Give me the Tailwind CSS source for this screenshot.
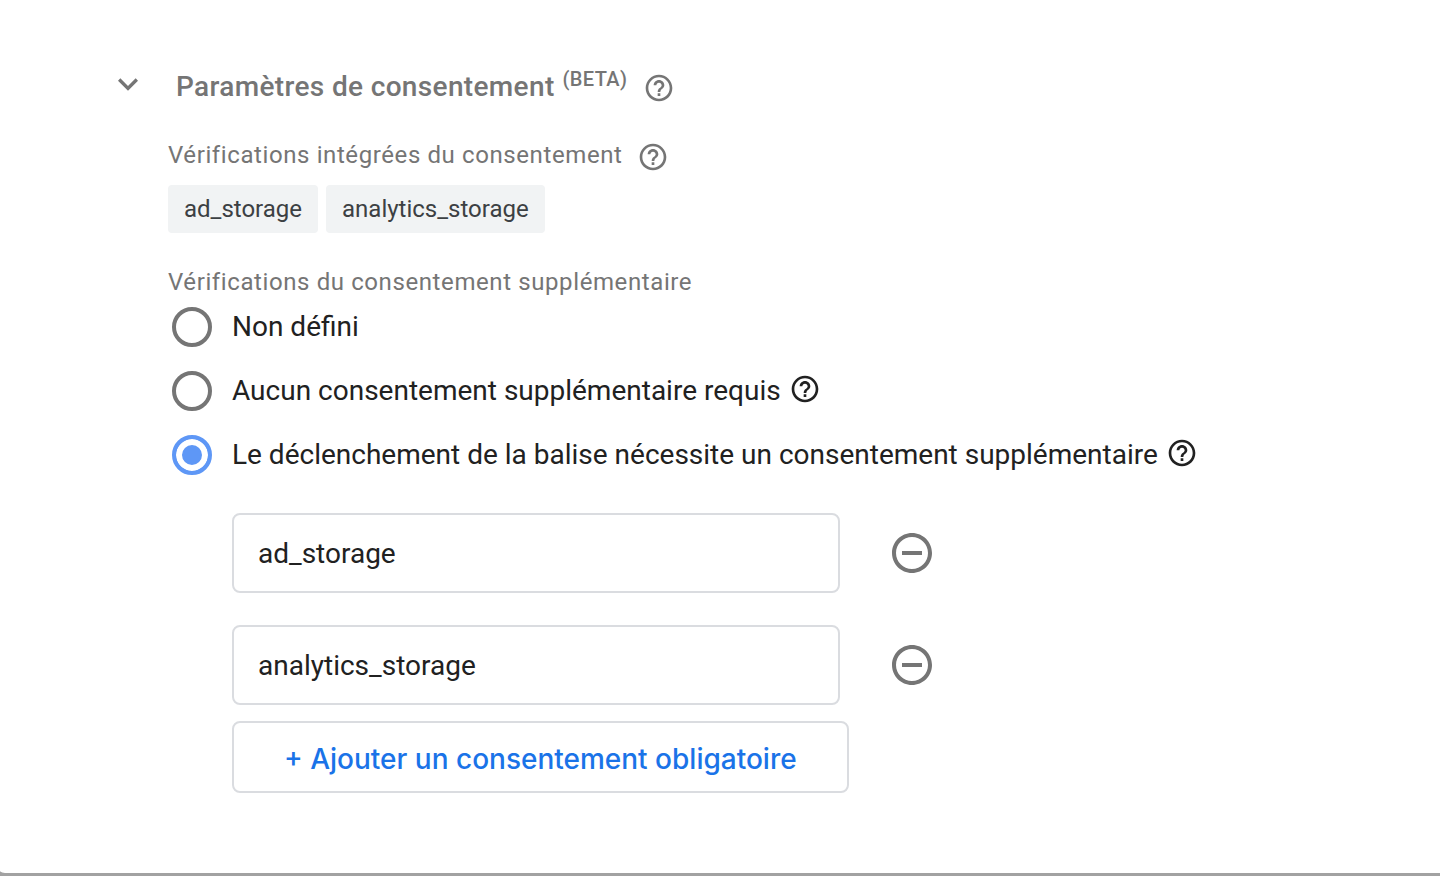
<!DOCTYPE html>
<html lang="fr">
<head>
  <meta charset="UTF-8" />
  <meta name="viewport" content="width=device-width, initial-scale=1.0"/>
  <title>Paramètres de consentement</title>
  <script src="https://cdn.jsdelivr.net/npm/@tailwindcss/browser@4"></script>
</head>
<body class="flex min-h-screen flex-col bg-[#a2a2a2] pb-[3px] font-['Roboto',sans-serif] text-[#212121]">

  <!-- Icônes partagées -->
  <svg class="hidden">
    <symbol id="help" viewBox="0 0 24 24">
      <path fill="currentColor" d="M11 18h2v-2h-2v2zm1-16C6.48 2 2 6.48 2 12s4.48 10 10 10 10-4.48 10-10S17.52 2 12 2zm0 18c-4.41 0-8-3.59-8-8s3.59-8 8-8 8 3.59 8 8-3.59 8-8 8zm0-14c-2.21 0-4 1.79-4 4h2c0-1.1.9-2 2-2s2 .9 2 2c0 2-3 1.75-3 5h2c0-2.25 3-2.5 3-5 0-2.21-1.79-4-4-4z"/>
    </symbol>
    <symbol id="remove" viewBox="0 0 24 24">
      <path fill="currentColor" d="M7 11v2h10v-2H7zm5-9C6.48 2 2 6.48 2 12s4.48 10 10 10 10-4.48 10-10S17.52 2 12 2zm0 18c-4.41 0-8-3.59-8-8s3.59-8 8-8 8 3.59 8 8-3.59 8-8 8z"/>
    </symbol>
  </svg>

  <main class="grow rounded-bl-[8px_2px] bg-white pt-16 pb-16">

    <!-- Titre de la section -->
    <header class="flex items-start pl-[108px] text-[#757575]">
      <button type="button" aria-label="Réduire" class="mr-7">
        <svg class="size-10" viewBox="0 0 24 24"><path fill="currentColor" d="M16.59 8.59L12 13.17 7.41 8.59 6 10l6 6 6-6z"/></svg>
      </button>
      <h1 class="flex items-start gap-2 pt-[3px] text-[28px] leading-10 font-medium tracking-[0.0125em]">
        Paramètres de consentement
        <span class="text-xl leading-6">(BETA)</span>
      </h1>
      <button type="button" aria-label="Aide" class="mt-2 ml-4"><svg class="size-8"><use href="#help"/></svg></button>
    </header>

    <div class="pl-[168px]">

      <!-- Vérifications intégrées -->
      <section class="pt-[30px]">
        <div class="flex items-center gap-[14px] text-[#757575]">
          <h2 class="text-2xl leading-8 tracking-wide">Vérifications intégrées du consentement</h2>
          <button type="button" aria-label="Aide" class="pt-1"><svg class="size-8"><use href="#help"/></svg></button>
        </div>
        <ul class="mt-3 flex gap-2 text-2xl text-[#3c4043]">
          <li class="rounded bg-[#f1f3f4] px-4 py-2">ad_storage</li>
          <li class="rounded bg-[#f1f3f4] px-4 py-2">analytics_storage</li>
        </ul>
      </section>

      <!-- Vérifications supplémentaires -->
      <fieldset class="pt-[33px]">
        <legend class="contents">
          <span class="block text-2xl leading-8 tracking-wide text-[#757575]">Vérifications du consentement supplémentaire</span>
        </legend>
        <div class="mt-[9px] flex flex-col gap-6 pl-1 text-[28px] leading-10">
          <div class="flex items-center">
            <input type="radio" name="consent" id="unset" class="mr-5 size-10 appearance-none rounded-full border-4 border-[#757575] checked:border-[#5e97f6] checked:bg-[#5e97f6] checked:shadow-[inset_0_0_0_6px_white]">
            <label for="unset">Non défini</label>
          </div>
          <div class="flex items-center">
            <input type="radio" name="consent" id="none" class="mr-5 size-10 appearance-none rounded-full border-4 border-[#757575] checked:border-[#5e97f6] checked:bg-[#5e97f6] checked:shadow-[inset_0_0_0_6px_white]">
            <label for="none">Aucun consentement supplémentaire requis</label>
            <button type="button" aria-label="Aide" class="ml-2 pb-1"><svg class="size-8"><use href="#help"/></svg></button>
          </div>
          <div class="flex items-center">
            <input type="radio" name="consent" id="required" checked class="mr-5 size-10 appearance-none rounded-full border-4 border-[#757575] checked:border-[#5e97f6] checked:bg-[#5e97f6] checked:shadow-[inset_0_0_0_6px_white]">
            <label for="required">Le déclenchement de la balise nécessite un consentement supplémentaire</label>
            <button type="button" aria-label="Aide" class="ml-2 pb-1"><svg class="size-8"><use href="#help"/></svg></button>
          </div>
        </div>
      </fieldset>

      <!-- Consentements obligatoires -->
      <div class="flex flex-col items-start pt-[38px] pl-16">
        <div class="mb-8 flex items-center gap-12">
          <input type="text" aria-label="Consentement 1" value="ad_storage" class="h-20 w-[608px] rounded-lg border-2 border-[#dadce0] px-6 text-[28px]">
          <button type="button" aria-label="Supprimer" class="text-[#757575]"><svg class="size-12"><use href="#remove"/></svg></button>
        </div>
        <div class="mb-4 flex items-center gap-12">
          <input type="text" aria-label="Consentement 2" value="analytics_storage" class="h-20 w-[608px] rounded-lg border-2 border-[#dadce0] px-6 text-[28px]">
          <button type="button" aria-label="Supprimer" class="text-[#757575]"><svg class="size-12"><use href="#remove"/></svg></button>
        </div>
        <button type="button" class="h-[72px] rounded-lg border-2 border-[#dadce0] px-[50px] pt-1 font-['Inter',sans-serif] text-[28px] font-medium text-[#1a73e8]">+ Ajouter un consentement obligatoire</button>
      </div>
    </div>
  </main>

</body>
</html>
